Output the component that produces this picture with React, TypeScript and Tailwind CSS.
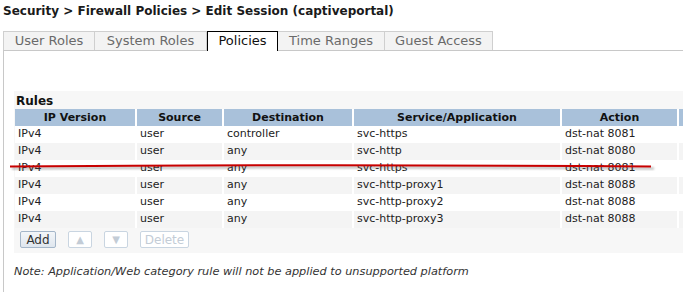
import React from "react";

// Firewall policy editor - "Policies" tab of a captive portal session

const tabs = [
  { label: "User Roles", w: "w-[92px]" },
  { label: "System Roles", w: "w-[112px]" },
  { label: "Policies", w: "w-[71px]" },
  { label: "Time Ranges", w: "w-[107px]" },
  { label: "Guest Access", w: "w-[108px]" },
];

const columns = [
  { label: "IP Version", w: "w-[120px]" },
  { label: "Source", w: "w-[87px]" },
  { label: "Destination", w: "w-[130px]" },
  { label: "Service/Application", w: "w-[208px]" },
  { label: "Action", w: "w-[117px]" },
  { label: "", w: "w-[80px]" },
];

const rules = [
  ["IPv4", "user", "controller", "svc-https", "dst-nat 8081", ""],
  ["IPv4", "user", "any", "svc-http", "dst-nat 8080", ""],
  ["IPv4", "user", "any", "svc-https", "dst-nat 8081", ""],
  ["IPv4", "user", "any", "svc-http-proxy1", "dst-nat 8088", ""],
  ["IPv4", "user", "any", "svc-http-proxy2", "dst-nat 8088", ""],
  ["IPv4", "user", "any", "svc-http-proxy3", "dst-nat 8088", ""],
];

const Tabs: React.FC = () => (
  <div className="flex ml-[3px] h-[20px] border-b border-[#c8c8c8]">
    {tabs.map((tab, i) => {
      const active = tab.label === "Policies";
      return (
        <div
          key={tab.label}
          className={
            active
              ? `${tab.w} h-[20px] border border-b-0 border-black bg-white text-center text-[13px] leading-[18px] text-[#111]`
              : `${tab.w} h-[19px] border border-b-0 ${i === 0 ? "" : "border-l-0"} border-[#cfcfcf] bg-[#f3f3f3] text-center text-[13px] leading-[18px] text-[#6a6a6a]`
          }
        >
          {tab.label}
        </div>
      );
    })}
  </div>
);

const RulesTable: React.FC = () => (
  <div className="ml-[1px] w-[760px]">
    <div className="flex h-[17px] bg-[#a9c1da]">
      {columns.map((c, i) => (
        <div
          key={i}
          className={`${c.w} ${i > 0 ? "border-l-2 border-white" : ""} text-center text-[11px] font-bold leading-[17px] text-[#111]`}
        >
          {c.label}
        </div>
      ))}
    </div>
    {rules.map((row, r) => (
      <div key={r} className={`flex h-[17px] ${r % 2 === 1 ? "bg-[#f4f4f4]" : "bg-white"}`}>
        {row.map((cell, i) => (
          <div
            key={i}
            className={`${columns[i].w} ${i > 0 ? "border-l-2 border-white" : ""} pl-[3px] text-[11px] leading-[16px] text-[#222]`}
          >
            {cell}
          </div>
        ))}
      </div>
    ))}
  </div>
);

export default function App() {
  return (
    <div className="relative w-[683px] h-[292px] overflow-hidden bg-white font-['DejaVu_Sans',sans-serif]">
      <h1 className="h-[31px] pl-[3px] pt-[4px] text-[12px] font-bold leading-[14px] text-[#1a1a1a]">
        Security &gt; Firewall Policies &gt; Edit Session (captiveportal)
      </h1>

      <Tabs />

      <div className="ml-[3px] h-[241px] border-l border-[#c8c8c8] pl-[10px] pt-[40px]">
        <div className="bg-[#f7f7f7] pt-[3px] pb-[5px]">
          <div className="pl-[2px] text-[12px] font-bold leading-[14px] text-[#111] mb-[1px]">Rules</div>
          <RulesTable />
          <div className="flex gap-[12px] pl-[6px] mt-[3px]">
            <button className="h-[17px] w-[36px] rounded-[2px] border border-[#a4b6c9] bg-gradient-to-b from-[#f3f6f9] to-[#dfe6ee] text-[12px] leading-[14px] text-[#333]">
              Add
            </button>
            <button className="h-[17px] w-[24px] rounded-[2px] border border-[#c9d5e1] bg-white text-[10px] leading-[14px] text-[#c3ccd6]">
              ▲
            </button>
            <button className="h-[17px] w-[24px] rounded-[2px] border border-[#c9d5e1] bg-white text-[10px] leading-[14px] text-[#c3ccd6]">
              ▼
            </button>
            <button className="h-[17px] w-[49px] rounded-[2px] border border-[#c9d5e1] bg-white text-[12px] leading-[14px] text-[#c3ccd6]">
              Delete
            </button>
          </div>
        </div>
        <p className="mt-[12px] text-[11.3px] italic leading-[14px] text-[#333]">
          Note: Application/Web category rule will not be applied to unsupported platform
        </p>
      </div>

      <svg className="absolute left-0 top-0 pointer-events-none" width="683" height="292">
        <defs>
          <filter id="shadow" x="-5%" y="-200%" width="110%" height="500%">
            <feGaussianBlur stdDeviation="1" />
          </filter>
        </defs>
        <path d="M12 168.5 Q330 166 654 168.5" stroke="#555" strokeWidth="2" fill="none" opacity="0.45" filter="url(#shadow)" />
        <path d="M10 166.5 Q330 164 651 166.5" stroke="#c80000" strokeWidth="2" fill="none" />
      </svg>
    </div>
  );
}
